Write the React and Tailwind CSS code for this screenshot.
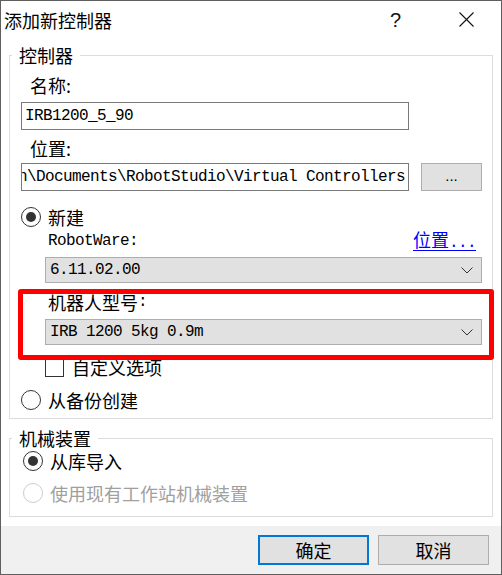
import React from "react";

function Radio({ checked, disabled }) {
  return (
    <div
      className={`w-[20px] h-[20px] rounded-full border flex items-center justify-center shrink-0 bg-white ${
        disabled ? "border-[#cccccc]" : "border-[#333333]"
      }`}
    >
      {checked && <div className="w-[10px] h-[10px] rounded-full bg-[#333333]" />}
    </div>
  );
}

function Chevron() {
  return (
    <svg width="12" height="7" viewBox="0 0 12 7" className="shrink-0">
      <polyline points="0.5,0.5 6,6 11.5,0.5" fill="none" stroke="#333" strokeWidth="1" />
    </svg>
  );
}

function Select({ value }) {
  return (
    <div className="h-[26px] w-[437px] bg-[#e1e1e1] border border-[#adadad] flex items-center pl-[4px] pr-[8px]">
      <span className="flex-1 font-['Liberation_Mono',monospace] text-[16px] tracking-[-0.6px] leading-[20px]">
        {value}
      </span>
      <Chevron />
    </div>
  );
}

export default function App() {
  return (
    <div className="w-[502px] h-[575px] border border-[#5f5f5f] bg-white flex flex-col text-black font-['Noto_Sans_CJK_SC',sans-serif] text-[18px]">
      {/* title bar */}
      <div className="h-[37px] flex items-center pl-[3px] shrink-0">
        <span className="leading-[22px]">添加新控制器</span>
        <span className="ml-auto mr-[58px] font-['Liberation_Sans',sans-serif] text-[20px] text-[#111]">?</span>
        <svg width="15" height="15" viewBox="0 0 15 15" className="mr-[27px]">
          <line x1="0.5" y1="0.5" x2="14.5" y2="14.5" stroke="#111" strokeWidth="1.1" />
          <line x1="14.5" y1="0.5" x2="0.5" y2="14.5" stroke="#111" strokeWidth="1.1" />
        </svg>
      </div>

      {/* body */}
      <div className="flex-1 pl-[8px] pr-[8px]">
        <fieldset className="mt-[7px] border border-[#dcdcdc] pb-[8px]">
          <legend className="ml-[2px] px-[7px] h-[20px] leading-[20px]">控制器</legend>
          <div className="pl-[11px] pr-[10px]">
            <div className="mt-[10px] ml-[9px] h-[20px] leading-[20px]">名称:</div>
            <div className="mt-[7px] h-[28px] w-[388px] border border-[#7a7a7a] flex items-center pl-[3px]">
              <span className="font-['Liberation_Mono',monospace] text-[16px] tracking-[-0.6px]">IRB1200_5_90</span>
            </div>
            <div className="mt-[8px] ml-[9px] h-[20px] leading-[20px]">位置:</div>
            <div className="mt-[5px] flex items-center">
              <div className="h-[28px] w-[388px] border border-[#7a7a7a] flex items-center justify-end overflow-hidden pr-[3px]">
                <span className="whitespace-nowrap font-['Liberation_Mono',monospace] text-[16px] tracking-[-0.6px]">
                  C:\Users\Admin\Documents\RobotStudio\Virtual Controllers
                </span>
              </div>
              <button className="ml-[12px] -mt-[1px] w-[61px] h-[28px] bg-[#e1e1e1] border border-[#adadad] font-['Liberation_Sans',sans-serif] text-[15px] leading-[20px] pb-[2px]">
                ...
              </button>
            </div>

            <div className="mt-[16px] flex items-center gap-[7px] h-[20px]">
              <Radio checked />
              <span className="leading-[20px]">新建</span>
            </div>

            <div className="pl-[24px]">
              <div className="mt-[4px] h-[20px] flex items-center ml-[3px] pr-[6px]">
                <span className="font-['Liberation_Mono',monospace] text-[16px] tracking-[-0.6px]">RobotWare:</span>
                <a className="ml-auto text-[#0000ff] underline underline-offset-[3px] leading-[20px] cursor-pointer">
                  位置<span className="font-['Liberation_Mono',monospace] text-[16px] tracking-[-0.6px]">...</span>
                </a>
              </div>
              <div className="mt-[6px]">
                <Select value="6.11.02.00" />
              </div>

              <div className="relative">
                <div className="mt-[9px] ml-[3px] h-[20px] flex items-center">
                  <span className="leading-[20px]">机器人型号</span>
                  <span className="font-['Liberation_Mono',monospace] text-[16px] leading-[20px]">:</span>
                </div>
                <div className="mt-[7px]">
                  <Select value="IRB 1200 5kg 0.9m" />
                </div>
                <div className="absolute z-10 -top-[3px] -bottom-[15px] -left-[27px] -right-[12px] border-[5px] border-[#ff0000] rounded-[3px] pointer-events-none" />
              </div>

              <div className="mt-[12px] flex items-center gap-[8px] h-[20px]">
                <div className="w-[19px] h-[19px] border border-[#333333] bg-white shrink-0" />
                <span className="leading-[20px]">自定义选项</span>
              </div>
            </div>

            <div className="mt-[13px] flex items-center gap-[7px] h-[20px]">
              <Radio />
              <span className="leading-[20px]">从备份创建</span>
            </div>
          </div>
        </fieldset>

        <fieldset className="mt-[9px] border border-[#dcdcdc] pb-[13px]">
          <legend className="ml-[2px] px-[7px] h-[20px] leading-[20px]">机械装置</legend>
          <div className="pl-[13px]">
            <div className="mt-[3px] flex items-center gap-[7px] h-[20px]">
              <Radio checked />
              <span className="leading-[20px]">从库导入</span>
            </div>
            <div className="mt-[12px] flex items-center gap-[7px] h-[20px]">
              <Radio disabled />
              <span className="leading-[20px] text-[#a0a0a0]">使用现有工作站机械装置</span>
            </div>
          </div>
        </fieldset>
      </div>

      {/* footer */}
      <div className="h-[48px] shrink-0 bg-[#f0f0f0] flex justify-end items-start pt-[9px] pr-[12px] gap-[9px]">
        <button className="w-[111px] h-[30px] bg-[#e1e1e1] border-2 border-[#0078d7] leading-[20px]">确定</button>
        <button className="w-[111px] h-[30px] bg-[#e1e1e1] border border-[#adadad] leading-[20px]">取消</button>
      </div>
    </div>
  );
}
